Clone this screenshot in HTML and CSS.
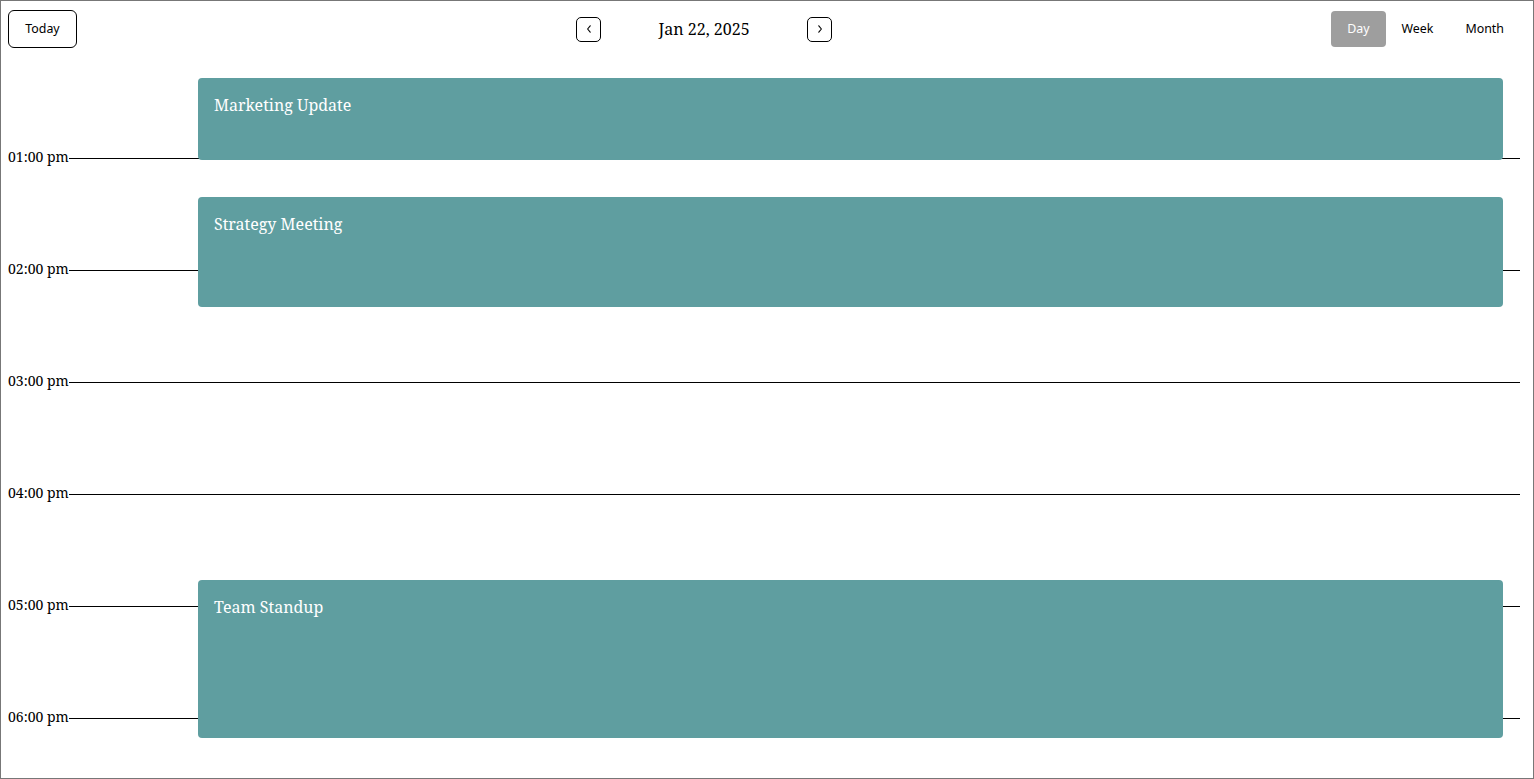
FILE: index.html
```html
<!DOCTYPE html>
<html>
<head>
<meta charset="utf-8">
<link rel="stylesheet" href="styles.css">
</head>
<body>
<div class="app">
  <header class="toolbar">
    <button class="btn today">Today</button>
    <div class="nav">
      <button class="btn icon" aria-label="Previous">
        <svg width="10" height="10" viewBox="0 0 10 10"><path d="M6.2 1.8 L3.6 5 L6.2 8.2" fill="none" stroke="#000" stroke-width="1.1" stroke-linecap="round" stroke-linejoin="round"/></svg>
      </button>
      <span class="date">Jan 22, 2025</span>
      <button class="btn icon" aria-label="Next">
        <svg width="10" height="10" viewBox="0 0 10 10"><path d="M3.8 1.8 L6.4 5 L3.8 8.2" fill="none" stroke="#000" stroke-width="1.1" stroke-linecap="round" stroke-linejoin="round"/></svg>
      </button>
    </div>
    <div class="views">
      <button class="view active">Day</button>
      <button class="view">Week</button>
      <button class="view">Month</button>
    </div>
  </header>
  <main class="timeline">
    <div class="hour"><span class="label">01:00 pm</span><span class="line"></span></div>
    <div class="hour"><span class="label">02:00 pm</span><span class="line"></span></div>
    <div class="hour"><span class="label">03:00 pm</span><span class="line"></span></div>
    <div class="hour"><span class="label">04:00 pm</span><span class="line"></span></div>
    <div class="hour"><span class="label">05:00 pm</span><span class="line"></span></div>
    <div class="hour"><span class="label">06:00 pm</span><span class="line"></span></div>
    <div class="event" style="top:30px;height:82px"><span class="title">Marketing Update</span></div>
    <div class="event" style="top:149px;height:110px"><span class="title">Strategy Meeting</span></div>
    <div class="event" style="top:532px;height:158px"><span class="title">Team Standup</span></div>
  </main>
</div>
</body>
</html>
```
FILE: styles.css
```css
html, body {
  margin: 0;
  padding: 0;
}
body {
  font-family: "Noto Serif", "DejaVu Serif", serif;
}
.app {
  box-sizing: border-box;
  height: 779px;
  border: 1px solid #777;
  padding: 0 13px 0 7px;
  overflow: hidden;
}
.toolbar {
  display: flex;
  justify-content: space-between;
  align-items: center;
  padding-top: 9px;
  height: 38px;
}
.btn {
  background: #fff;
  border: 1px solid #000;
  color: #000;
  padding: 0;
  cursor: pointer;
}
.today {
  width: 69px;
  height: 38px;
  padding-bottom: 2px;
  border-radius: 6px;
  font-family: "Noto Sans", "Open Sans", sans-serif;
  font-size: 12.4px;
}
.nav {
  display: flex;
  align-items: center;
}
.icon {
  width: 25px;
  height: 25px;
  border-radius: 5px;
  display: flex;
  align-items: center;
  justify-content: center;
}
.date {
  width: 206px;
  text-align: center;
  font-size: 16px;
}
.views {
  display: flex;
}
.view {
  height: 36px;
  padding: 0 16px 2px;
  border: 0;
  border-radius: 4px;
  background: transparent;
  color: #000;
  font-family: "Noto Sans", "Open Sans", sans-serif;
  font-size: 12.4px;
}
.view.active {
  background: #9e9e9e;
  color: #fff;
}
.timeline {
  position: relative;
  padding-top: 100px;
}
.hour {
  display: flex;
  height: 112px;
  align-items: flex-start;
}
.label {
  font-size: 14px;
  line-height: 18px;
  width: 61px;
  flex: none;
}
.line {
  flex: 1;
  border-top: 1px solid #000;
  margin-top: 10px;
}
.event {
  position: absolute;
  left: 190px;
  right: 17px;
  background: #5f9ea0;
  border-radius: 4px;
  box-sizing: border-box;
  padding: 16px;
  color: #fff;
  font-size: 16px;
  line-height: 22px;
}
```
